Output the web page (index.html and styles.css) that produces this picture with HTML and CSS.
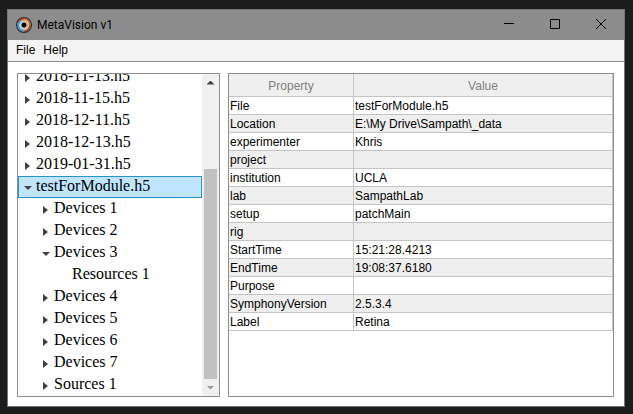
FILE: index.html
```html
<!DOCTYPE html>
<html lang="en">
<head>
<meta charset="utf-8">
<title>MetaVision v1</title>
<link rel="stylesheet" href="styles.css">
</head>
<body>
<div class="window">
  <header class="titlebar">
    <svg class="logo" viewBox="0 0 16 16" aria-hidden="true">
      <circle cx="8" cy="8" r="8" fill="#33292b"/>
      <path d="M2 4.500A7 7 0 0 1 8 1v7z" fill="#b5543f"/>
      <path d="M8 1a7 7 0 0 1 7 7H8z" fill="#d9653a"/>
      <path d="M15 8a7 7 0 0 1-7 7V8z" fill="#a5523a"/>
      <path d="M8 15A7 7 0 0 1 2 4.500L8 8z" fill="#4a94bd"/>
      <circle cx="8" cy="8" r="5" fill="#a9d2e2"/>
      <path d="M8 3a5 5 0 0 1 0 10z" fill="#eab794"/>
      <circle cx="8" cy="8" r="2.500" fill="#08090b"/>
    </svg>
    <h1 class="title">MetaVision v1</h1>
    <div class="controls">
      <button class="control" aria-label="Minimize"><svg viewBox="0 0 10 10"><path d="M0 4.500h10"/></svg></button>
      <button class="control" aria-label="Maximize"><svg viewBox="0 0 10 10"><path d="M.5.5h9v9h-9z"/></svg></button>
      <button class="control" aria-label="Close"><svg viewBox="0 0 10 10"><path d="M0 0l10 10M10 0L0 10"/></svg></button>
    </div>
  </header>
  <nav class="menu">
    <button class="menu-item">File</button>
    <button class="menu-item">Help</button>
  </nav>
  <main class="content">
    <section class="panel tree-panel">
      <div class="tree">
        <button class="node">2018-11-13.h5</button>
        <button class="node">2018-11-15.h5</button>
        <button class="node">2018-12-11.h5</button>
        <button class="node">2018-12-13.h5</button>
        <button class="node">2019-01-31.h5</button>
        <button class="node open selected">testForModule.h5</button>
        <button class="node child">Devices 1</button>
        <button class="node child">Devices 2</button>
        <button class="node child open">Devices 3</button>
        <button class="node leaf">Resources 1</button>
        <button class="node child">Devices 4</button>
        <button class="node child">Devices 5</button>
        <button class="node child">Devices 6</button>
        <button class="node child">Devices 7</button>
        <button class="node child">Sources 1</button>
      </div>
      <div class="scrollbar">
        <button class="scroll-button up" aria-label="Scroll up"></button>
        <div class="track"><div class="thumb"></div></div>
        <button class="scroll-button down" aria-label="Scroll down"></button>
      </div>
    </section>
    <section class="panel">
      <table class="properties">
        <thead><tr><th class="name">Property</th><th>Value</th></tr></thead>
        <tbody>
          <tr><td>File</td><td>testForModule.h5</td></tr>
          <tr><td>Location</td><td>E:\My Drive\Sampath\_data</td></tr>
          <tr><td>experimenter</td><td>Khris</td></tr>
          <tr><td>project</td><td></td></tr>
          <tr><td>institution</td><td>UCLA</td></tr>
          <tr><td>lab</td><td>SampathLab</td></tr>
          <tr><td>setup</td><td>patchMain</td></tr>
          <tr><td>rig</td><td></td></tr>
          <tr><td>StartTime</td><td>15:21:28.4213</td></tr>
          <tr><td>EndTime</td><td>19:08:37.6180</td></tr>
          <tr><td>Purpose</td><td></td></tr>
          <tr><td>SymphonyVersion</td><td>2.5.3.4</td></tr>
          <tr><td>Label</td><td>Retina</td></tr>
        </tbody>
      </table>
    </section>
  </main>
</div>
</body>
</html>
```
FILE: styles.css
```css
* {
  box-sizing: border-box;
}

body {
  margin: 0;
  height: 100vh;
  padding: 9px 8px 7px 7px;
  background: #1c1c1c;
  font: 12px "Liberation Sans", Arial, sans-serif;
  color: #000;
}

button {
  margin: 0;
  padding: 0;
  border: 0;
  background: none;
  font: inherit;
  color: inherit;
}

.window {
  display: flex;
  flex-direction: column;
  height: 100%;
  border: 1px solid #777;
  background: #fff;
}

.titlebar {
  display: flex;
  align-items: center;
  flex: none;
  height: 30px;
  padding-left: 8px;
  background: #8c8c8c;
}

.logo {
  width: 16px;
  height: 16px;
  margin-right: 5px;
}

.title {
  margin: 0;
  font: 12px Roboto, sans-serif;
}

.controls {
  display: flex;
  height: 100%;
  margin-left: auto;
}

.control {
  display: flex;
  align-items: center;
  justify-content: center;
  width: 46px;
  padding-bottom: 2px;
}

.control svg {
  width: 10px;
  height: 10px;
  overflow: visible;
  fill: none;
  stroke: #000;
}

.menu {
  display: flex;
  flex: none;
  gap: 8px;
  height: 22px;
  padding: 0 8px 2px;
  border-bottom: 1px solid #8c8c8c;
  background: #f3f3f3;
}

.content {
  display: grid;
  grid-template-columns: 203fr 386fr;
  gap: 8px;
  flex: 1;
  min-height: 0;
  padding: 11px 10px 9px 9px;
}

.panel {
  min-width: 0;
  min-height: 0;
  border: 1px solid #8f8f8f;
  overflow: hidden;
}

.tree-panel {
  display: flex;
}

.tree {
  display: flex;
  flex: 1;
  flex-direction: column;
  justify-content: flex-end;
  min-width: 0;
}

.node {
  display: flex;
  align-items: center;
  flex: none;
  height: 22px;
  padding: 0 0 2px 6px;
  border: 1px solid transparent;
  font: 16px/18px "Liberation Serif", "Times New Roman", serif;
  white-space: nowrap;
}

.node::before {
  content: "";
  width: 5px;
  height: 8px;
  margin: 4px 6px 0 0;
  background: #404040;
  clip-path: polygon(0 0, 100% 50%, 0 100%);
}

.node.open::before {
  width: 8px;
  height: 4px;
  margin: 4px 4px 0 -1px;
  clip-path: polygon(0 0, 100% 0, 50% 100%);
}

.node.child {
  padding-left: 24px;
}

.node.leaf {
  padding-left: 53px;
}

.node.leaf::before {
  display: none;
}

.node.selected {
  border-color: #2693d2;
  background: #bfe5ff;
}

.scrollbar {
  display: flex;
  flex-direction: column;
  width: 17px;
  background: #f0f0f0;
}

.scroll-button {
  display: flex;
  align-items: center;
  justify-content: center;
  height: 17px;
}

.scroll-button::before {
  content: "";
  width: 8px;
  height: 4px;
}

.scroll-button.up::before {
  background: #404040;
  clip-path: polygon(50% 0, 100% 100%, 0 100%);
}

.scroll-button.down::before {
  background: #999;
  clip-path: polygon(0 0, 100% 0, 50% 100%);
}

.track {
  display: flex;
  align-items: flex-end;
  flex: 1;
  padding: 0 2px;
}

.thumb {
  width: 100%;
  height: 73%;
  background: #c1c1c1;
}

.properties {
  width: 100%;
  border-spacing: 0;
  table-layout: fixed;
}

.properties th,
.properties td {
  height: 18px;
  padding: 1px 1px 0;
  border-right: 1px solid #c4c4c4;
  border-bottom: 1px solid #c4c4c4;
  line-height: 16px;
  text-align: left;
  white-space: nowrap;
}

.properties th {
  height: 23px;
  padding-top: 2px;
  background: #efefef;
  color: #808080;
  font-weight: normal;
  text-align: center;
}

.properties .name {
  width: 125px;
}

.properties tr:nth-child(even) td {
  background: #efefef;
}
```
